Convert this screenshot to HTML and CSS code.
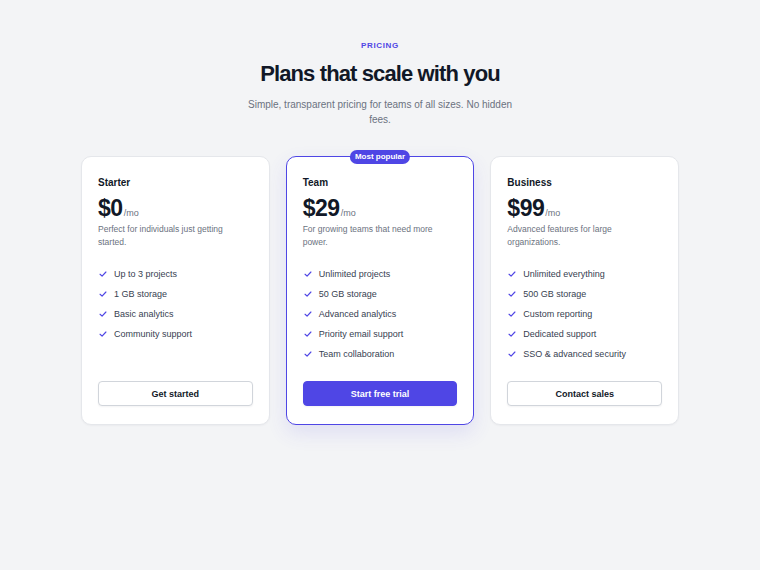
FILE: index.html
```html
<!DOCTYPE html>
<html lang="en">
<head>
    <meta charset="UTF-8">
    <meta name="viewport" content="width=device-width, initial-scale=1.0">
    <title>Pricing</title>
    <link rel="stylesheet" href="styles.css">
</head>
<body>
<section class="pricing">
    <div class="eyebrow">PRICING</div>
    <h1 class="title">Plans that scale with you</h1>
    <p class="subtitle">Simple, transparent pricing for teams of all sizes. No hidden fees.</p>

    <div class="plans">
        <div class="plan">
            <div class="plan-name">Starter</div>
            <div class="plan-price"><span class="amount">$0</span><span class="per">/mo</span></div>
            <p class="plan-desc">Perfect for individuals just getting started.</p>
            <ul class="features">
                <li><svg class="check" viewBox="0 0 12 12"><path d="M2.5 6.3l2.4 2.3 4.6-5"/></svg>Up to 3 projects</li>
                <li><svg class="check" viewBox="0 0 12 12"><path d="M2.5 6.3l2.4 2.3 4.6-5"/></svg>1 GB storage</li>
                <li><svg class="check" viewBox="0 0 12 12"><path d="M2.5 6.3l2.4 2.3 4.6-5"/></svg>Basic analytics</li>
                <li><svg class="check" viewBox="0 0 12 12"><path d="M2.5 6.3l2.4 2.3 4.6-5"/></svg>Community support</li>
            </ul>
            <button class="plan-button">Get started</button>
        </div>

        <div class="plan plan-popular">
            <span class="badge">Most popular</span>
            <div class="plan-name">Team</div>
            <div class="plan-price"><span class="amount">$29</span><span class="per">/mo</span></div>
            <p class="plan-desc">For growing teams that need more power.</p>
            <ul class="features">
                <li><svg class="check" viewBox="0 0 12 12"><path d="M2.5 6.3l2.4 2.3 4.6-5"/></svg>Unlimited projects</li>
                <li><svg class="check" viewBox="0 0 12 12"><path d="M2.5 6.3l2.4 2.3 4.6-5"/></svg>50 GB storage</li>
                <li><svg class="check" viewBox="0 0 12 12"><path d="M2.5 6.3l2.4 2.3 4.6-5"/></svg>Advanced analytics</li>
                <li><svg class="check" viewBox="0 0 12 12"><path d="M2.5 6.3l2.4 2.3 4.6-5"/></svg>Priority email support</li>
                <li><svg class="check" viewBox="0 0 12 12"><path d="M2.5 6.3l2.4 2.3 4.6-5"/></svg>Team collaboration</li>
            </ul>
            <button class="plan-button primary">Start free trial</button>
        </div>

        <div class="plan">
            <div class="plan-name">Business</div>
            <div class="plan-price"><span class="amount">$99</span><span class="per">/mo</span></div>
            <p class="plan-desc">Advanced features for large organizations.</p>
            <ul class="features">
                <li><svg class="check" viewBox="0 0 12 12"><path d="M2.5 6.3l2.4 2.3 4.6-5"/></svg>Unlimited everything</li>
                <li><svg class="check" viewBox="0 0 12 12"><path d="M2.5 6.3l2.4 2.3 4.6-5"/></svg>500 GB storage</li>
                <li><svg class="check" viewBox="0 0 12 12"><path d="M2.5 6.3l2.4 2.3 4.6-5"/></svg>Custom reporting</li>
                <li><svg class="check" viewBox="0 0 12 12"><path d="M2.5 6.3l2.4 2.3 4.6-5"/></svg>Dedicated support</li>
                <li><svg class="check" viewBox="0 0 12 12"><path d="M2.5 6.3l2.4 2.3 4.6-5"/></svg>SSO &amp; advanced security</li>
            </ul>
            <button class="plan-button">Contact sales</button>
        </div>
    </div>
</section>
</body>
</html>
```

FILE: styles.css
```css
body {
    margin: 0;
    background-color: #f3f4f6;
    font-family: "Liberation Sans", Arial, sans-serif;
    color: #111827;
}
.pricing {
    padding: 40px 0;
    text-align: center;
}
.eyebrow {
    font-size: 8px;
    line-height: 12px;
    font-weight: 700;
    letter-spacing: 0.08em;
    color: #4f46e5;
}
.title {
    margin: 8px 0 0;
    font-size: 22px;
    line-height: 28px;
    font-weight: 700;
    letter-spacing: -0.04em;
    color: #111827;
}
.subtitle {
    max-width: 272px;
    margin: 9px auto 0;
    font-size: 10px;
    line-height: 15px;
    color: #6b7280;
}
.plans {
    display: grid;
    grid-template-columns: repeat(3, 1fr);
    gap: 16px;
    width: 598px;
    margin: 29px auto 0;
    text-align: left;
}
.plan {
    position: relative;
    display: flex;
    flex-direction: column;
    background-color: #ffffff;
    border: 1px solid #e5e7eb;
    border-radius: 10px;
    padding: 17px 16px 18px;
    box-shadow: 0 1px 2px rgba(17, 24, 39, 0.04);
}
.plan-popular {
    border: 1.5px solid #4f46e5;
    box-shadow: 0 8px 20px rgba(79, 70, 229, 0.12);
}
.badge {
    position: absolute;
    top: -7px;
    left: 50%;
    transform: translateX(-50%);
    height: 14px;
    padding: 0 5px;
    border-radius: 7px;
    background-color: #4f46e5;
    color: #ffffff;
    font-size: 8px;
    line-height: 14px;
    font-weight: 700;
    white-space: nowrap;
}
.plan-name {
    font-size: 10px;
    line-height: 18px;
    font-weight: 700;
    color: #111827;
}
.plan-price {
    margin-top: 5px;
    display: flex;
    align-items: baseline;
}
.amount {
    font-size: 23px;
    line-height: 22px;
    font-weight: 700;
    letter-spacing: -0.02em;
    color: #111827;
}
.per {
    margin-left: 1px;
    font-size: 9px;
    color: #6b7280;
}
.plan-desc {
    margin: 4px 0 0;
    font-size: 8.5px;
    line-height: 13px;
    color: #6b7280;
}
.features {
    list-style: none;
    margin: 15px 0 17px;
    padding: 0;
}
.features li {
    display: flex;
    align-items: center;
    height: 20px;
    font-size: 9px;
    color: #374151;
}
.check {
    width: 10px;
    height: 10px;
    margin-right: 6px;
    fill: none;
    stroke: #4f46e5;
    stroke-width: 1.4;
    stroke-linecap: round;
    stroke-linejoin: round;
}
.plan-button {
    margin-top: auto;
    height: 25px;
    width: 100%;
    border: 1px solid #d1d5db;
    border-radius: 4px;
    background-color: #ffffff;
    font-family: inherit;
    font-size: 9px;
    font-weight: 700;
    color: #111827;
    cursor: pointer;
    box-shadow: 0 1px 2px rgba(17, 24, 39, 0.05);
}
.plan-button.primary {
    border-color: #4f46e5;
    background-color: #4f46e5;
    color: #ffffff;
}
.plan-button.primary:hover {
    background-color: #4338ca;
}
```
